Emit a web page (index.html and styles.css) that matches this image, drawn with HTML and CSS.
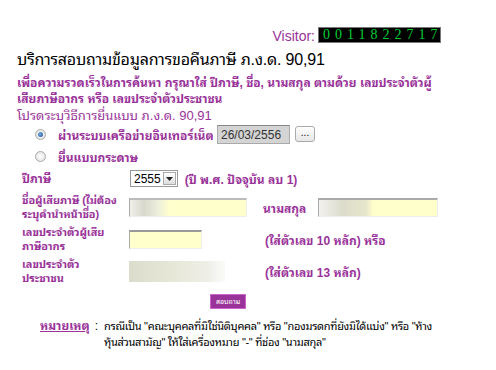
FILE: index.html
```html
<!DOCTYPE HTML>
<html>
    <head>
        <meta charset="utf-8">
        <link rel="stylesheet" href="styles.css">
    </head>

    <body>
        <div class="page">
            <div class="visitor">
                <span class="visitor-label">Visitor:</span>
                <span class="counter">0011822717</span>
            </div>

            <h1 class="title">บริการสอบถามข้อมูลการขอคืนภาษี ภ.ง.ด. 90,91</h1>
            <p class="intro">เพื่อความรวดเร็วในการค้นหา กรุณาใส่ ปีภาษี, ชื่อ, นามสกุล ตามด้วย เลขประจำตัวผู้เสียภาษีอากร หรือ เลขประจำตัวประชาชน</p>
            <p class="choose">โปรดระบุวิธีการยื่นแบบ ภ.ง.ด. 90,91</p>

            <div class="option first">
                <span class="radio checked"></span>
                <span class="option-text">ผ่านระบบเครือข่ายอินเทอร์เน็ต</span>
                <span class="date-box">26/03/2556</span>
                <span class="dots-btn">...</span>
            </div>
            <div class="option">
                <span class="radio"></span>
                <span class="option-text">ยื่นแบบกระดาษ</span>
            </div>

            <div class="form-grid">
                <div class="label year">ปีภาษี</div>
                <div class="field wide">
                    <span class="select">
                        <span class="select-value">2555</span>
                        <span class="select-arrow">
                            <svg width="7" height="4" viewBox="0 0 7 4"><path d="M0 0h7L3.5 4z" fill="#222"/></svg>
                        </span>
                    </span>
                    <span class="hint">(ปี พ.ศ. ปัจจุบัน ลบ 1)</span>
                </div>

                <div class="label">ชื่อผู้เสียภาษี (ไม่ต้อง<br>ระบุคำนำหน้าชื่อ)</div>
                <div class="field"><span class="input input-name"></span></div>
                <div class="field">
                    <span class="side-label">นามสกุล</span>
                    <span class="input input-surname"></span>
                </div>

                <div class="label">เลขประจำตัวผู้เสีย<br>ภาษีอากร</div>
                <div class="field"><span class="input input-tax"></span></div>
                <div class="field"><span class="hint">(ใส่ตัวเลข 10 หลัก) หรือ</span></div>

                <div class="label">เลขประจำตัว<br>ประชาชน</div>
                <div class="field"><span class="input input-id"></span></div>
                <div class="field"><span class="hint">(ใส่ตัวเลข 13 หลัก)</span></div>
            </div>

            <div class="submit-row">
                <span class="submit">สอบถาม</span>
            </div>

            <div class="note">
                <span class="note-head">หมายเหตุ</span>
                <span class="note-colon">:</span>
                <span class="note-text">กรณีเป็น "คณะบุคคลที่มิใช่นิติบุคคล" หรือ "กองมรดกที่ยังมิได้แบ่ง" หรือ "ห้าง<br>หุ้นส่วนสามัญ" ให้ใส่เครื่องหมาย "-" ที่ช่อง "นามสกุล"</span>
            </div>
        </div>
    </body>
</html>
```

FILE: styles.css
```css
* {
    margin: 0;
    padding: 0;
    box-sizing: border-box;
}

body {
    background-color: #fff;
    font-family: "Liberation Sans", "Noto Sans Thai Looped", sans-serif;
    font-size: 12px;
    color: #000;
}

.page {
    width: 424px;
    margin-left: 17px;
    padding-top: 26px;
}

/* visitor counter */

.visitor {
    display: flex;
    justify-content: flex-end;
    align-items: center;
    gap: 3px;
    height: 17px;
}

.visitor-label {
    color: #993399;
    font-size: 14px;
    padding-top: 3px;
}

.counter {
    background-color: #000;
    border: 1px solid #777;
    color: #00cc33;
    font-family: "Liberation Serif", serif;
    font-size: 14px;
    letter-spacing: 5px;
    line-height: 13px;
    padding-left: 4px;
    width: 123px;
    height: 16px;
}

/* headings */

.title {
    font-size: 16px;
    font-weight: normal;
    line-height: 22px;
    margin-top: 6px;
    letter-spacing: -0.2px;
}

.intro {
    color: #993399;
    font-weight: bold;
    font-size: 12px;
    line-height: 16px;
    margin-top: 4px;
    width: 420px;
}

.choose {
    color: #993399;
    font-size: 13px;
    line-height: 15px;
    margin-top: 1px;
}

/* filing options */

.option {
    display: flex;
    align-items: center;
    height: 22px;
    padding-left: 18px;
}

.radio {
    width: 11px;
    height: 11px;
    border-radius: 50%;
    border: 1px solid #aaa;
    background: radial-gradient(circle, #fff 0, #ddd 100%);
    margin-right: 12px;
    position: relative;
}

.radio.checked::after {
    content: "";
    position: absolute;
    left: 2px;
    top: 2px;
    width: 5px;
    height: 5px;
    border-radius: 50%;
    background: radial-gradient(circle at 40% 40%, #7ad 0, #1a4f9a 100%);
}

.option-text {
    color: #993399;
    font-weight: bold;
    width: 159px;
}

.date-box {
    width: 73px;
    height: 19px;
    background-color: #d4d4d4;
    border: 1px solid #aaa;
    border-top-color: #888;
    color: #333;
    padding: 2px 3px;
    line-height: 14px;
}

.dots-btn {
    margin-left: 5px;
    width: 20px;
    height: 16px;
    border: 1px solid #aaa;
    border-radius: 3px;
    background: linear-gradient(#fff, #e6e6e6);
    font-size: 10px;
    text-align: center;
    line-height: 12px;
}

/* form rows */

.form-grid {
    display: grid;
    grid-template-columns: 107px 134px 180px;
    grid-template-rows: 23px 30px 30px 30px;
    row-gap: 2px;
    align-items: center;
    padding-left: 5px;
}

.label {
    color: #993399;
    font-weight: bold;
    font-size: 11px;
    letter-spacing: -0.1px;
    line-height: 14px;
}

.label.year {
    font-size: 12px;
}

.field {
    display: flex;
    align-items: center;
}

.field.wide {
    grid-column: 2 / 4;
}

.side-label {
    color: #993399;
    font-weight: bold;
    width: 55px;
}

.hint {
    color: #993399;
    font-weight: bold;
    margin-left: 2px;
}

.select {
    display: flex;
    align-items: center;
    height: 17px;
    border: 1px solid #999;
    margin-left: 1px;
    margin-right: 5px;
    background-color: #fff;
}

.select-value {
    padding: 0 2px 0 3px;
    color: #000;
}

.select-arrow {
    width: 13px;
    height: 13px;
    margin-right: 1px;
    border: 1px solid #aaa;
    background: linear-gradient(#fff, #ddd);
    display: flex;
    align-items: center;
    justify-content: center;
}

.input {
    display: block;
    height: 19px;
    background-color: #ffffcc;
    border-top: 2px solid #999;
    border-left: 1px solid #aaa;
    border-right: 1px solid #eee;
    border-bottom: 1px solid #eee;
}

.input-name {
    width: 118px;
    background: linear-gradient(90deg, #f0f0ea 0, #d8d8cc 12%, #eeeedd 24%, #ffffcc 34%);
    border-top-color: #bbb;
}

.input-surname {
    width: 120px;
    background: linear-gradient(90deg, #f2f2ee 0, #dcdccc 20%, #e6e6cc 40%, #ffffcc 46%);
    border-top-color: #aaa;
}

.input-tax {
    width: 73px;
}

.input-id {
    width: 96px;
    height: 21px;
    border: none;
    background: linear-gradient(90deg, #dcdccc 0, #e6e6d6 40%, #eeeee6 80%, #fafafa 100%);
}

/* submit and note */

.submit-row {
    display: flex;
    padding-left: 193px;
    margin-top: 8px;
}

.submit {
    background-color: #993399;
    border: 1px solid #cc66cc;
    color: #fff;
    font-size: 7px;
    width: 36px;
    height: 15px;
    line-height: 13px;
    text-align: center;
}

.note {
    display: flex;
    margin-top: 9px;
    padding-left: 23px;
    line-height: 16px;
}

.note-head {
    color: #993399;
    font-weight: bold;
    text-decoration: underline;
    flex-shrink: 0;
}

.note-colon {
    margin: 0 6px 0 5px;
    flex-shrink: 0;
}

.note-text {
    font-size: 11px;
    letter-spacing: -0.3px;
    white-space: nowrap;
}
```
